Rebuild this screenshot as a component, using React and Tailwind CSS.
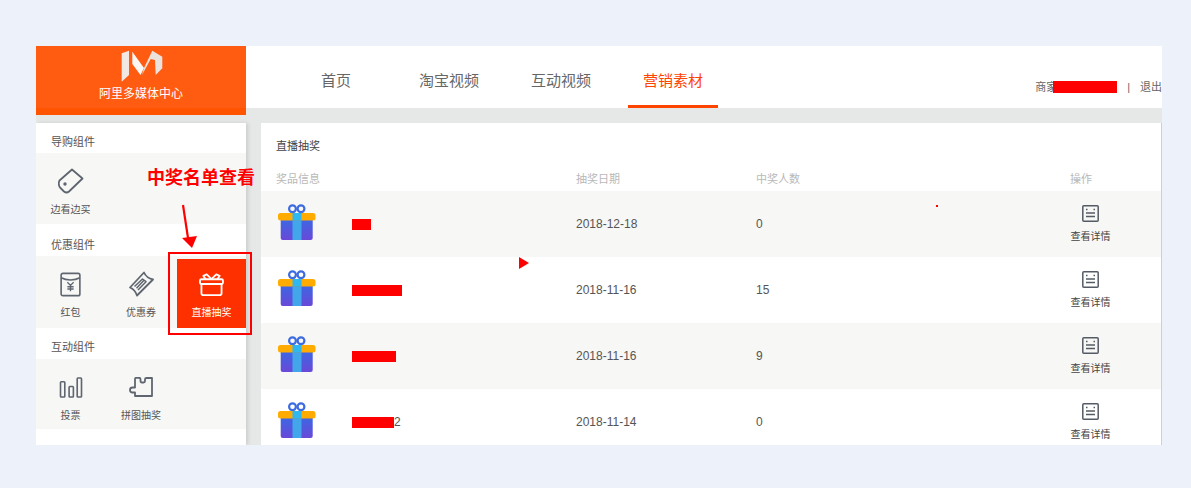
import React from "react";

const FONT = '"Liberation Sans", "Noto Sans CJK SC", sans-serif';

// 奖品图标
function GiftIcon({ id }) {
  return (
    <svg width="38" height="38" viewBox="0 0 38 38" className="mb-[2px] shrink-0">
      <defs>
        <linearGradient id={id} x1="0" y1="0" x2="0" y2="1">
          <stop offset="0" stopColor="#3a68e4" />
          <stop offset="1" stopColor="#6a48d8" />
        </linearGradient>
      </defs>
      <circle cx="14.5" cy="4.8" r="3.4" fill="none" stroke="#3d6be0" strokeWidth="2.2" />
      <circle cx="23" cy="4.8" r="3.4" fill="none" stroke="#3d6be0" strokeWidth="2.2" />
      <path d="M2.7 15h32v19a2 2 0 0 1-2 2H4.7a2 2 0 0 1-2-2z" fill={`url(#${id})`} />
      <rect x="0" y="9" width="37.5" height="7.5" rx="2.5" fill="#ffab00" />
      <rect x="14.5" y="9" width="9" height="7.5" fill="#2fb8ef" />
      <rect x="14.5" y="16.5" width="9" height="19.5" fill="#43a5ea" />
    </svg>
  );
}

function TagIcon() {
  return (
    <svg width="26" height="26" viewBox="0 0 26 26" fill="none" stroke="#5f6670" strokeWidth="1.8" strokeLinejoin="round">
      <path d="M14 1.5 24.5 10.5 11 23.5q-2.500 2-5 0L2.500 20Q.5 18 .8 14.500l.7-2z" />
      <circle cx="7" cy="16" r="1.7" fill="#5f6670" stroke="none" />
    </svg>
  );
}

function PacketIcon() {
  return (
    <svg width="23" height="25" viewBox="0 0 24 28" fill="none" stroke="#5f6670" strokeWidth="1.8">
      <rect x="1.5" y="1.5" width="21" height="25" rx="2" />
      <path d="M1.5 6.5c6 3.2 15 3.2 21 0" />
      <path d="M8.5 11.5 12 15l3.5-3.5M12 15v6.500M8.500 16.500h7M8.500 19h7" strokeWidth="1.5" />
    </svg>
  );
}

function CouponIcon() {
  return (
    <svg width="25" height="26" viewBox="0 0 25 26" fill="none" stroke="#5f6670" strokeWidth="1.8" strokeLinejoin="round">
      <path d="M15 1.500Q17.500 7 24 8.500L8 24.500Q6 18.500 1 16.500z" />
      <path d="M5.500 15.500 13.500 8l3.500 2.700L9 19M7.500 17.300 15 9.300" strokeWidth="1.500" />
    </svg>
  );
}

function BarsIcon() {
  return (
    <svg width="24" height="21" viewBox="0 0 24 22" fill="none" stroke="#5f6670" strokeWidth="1.7">
      <rect x="1" y="5" width="4.5" height="16" rx="0.8" />
      <rect x="10" y="10" width="4.5" height="11" rx="0.8" />
      <rect x="18.5" y="1" width="4.5" height="20" rx="0.8" />
    </svg>
  );
}

function PuzzleIcon() {
  return (
    <svg width="24" height="20" viewBox="0 0 24 20" fill="none" stroke="#5f6670" strokeWidth="1.8" strokeLinejoin="round">
      <path d="M6 5.500V2q0-1.200 1.200-1.200H10q1.500 0 1.500 1.500V4q0 1.500 1.500 1.500h1.500q1.500 0 1.500-1.500V2.300Q16 1 17.500 1H23v18H6v-3.500H3.500Q1 15.500 1 13t2.500-2.500H6z" />
    </svg>
  );
}

function PrizeBoxIcon() {
  return (
    <svg width="25" height="23" viewBox="0 0 26 24" fill="none" stroke="#fff" strokeWidth="1.9" strokeLinejoin="round">
      <rect x="1" y="6.5" width="24" height="5" rx="1.5" />
      <path d="M2.500 11.500V21a2 2 0 0 0 2 2h17a2 2 0 0 0 2-2v-9.500" />
      <path d="M13 6.500 8 1.500 4.500 3 7 6.500M13 6.500l5-5L21.500 3 19 6.500" />
    </svg>
  );
}

function DetailIcon() {
  return (
    <svg width="17" height="17" viewBox="0 0 17 17" fill="none" stroke="#555b64" strokeWidth="1.3">
      <rect x="0.8" y="0.8" width="15.4" height="15.4" rx="1" strokeWidth="1.5" />
      <path d="M4 4.500h1.500M11.500 4.500H13M4 8h9M4 11.500h9" />
    </svg>
  );
}

function SideCell({ icon, label, active, className }) {
  return (
    <div className={`flex flex-col items-center ${className} ${active ? "bg-[#ff3000] text-white" : "text-[#555]"}`}>
      {label && (
        <>
          <div className="mt-[10px] flex h-[30px] items-center justify-center">{icon}</div>
          <span className="mt-[7px] text-[10px] leading-[14px]">{label}</span>
        </>
      )}
    </div>
  );
}

function SideGroup({ title, children, titleClass }) {
  return (
    <div>
      <div className={`pl-[15px] text-[11px] leading-[14px] text-[#555] ${titleClass}`}>{title}</div>
      <div className="flex gap-[2px] bg-[#f7f7f5] pt-[3px]">{children}</div>
    </div>
  );
}

const rows = [
  { date: "2018-12-18", count: "0", bar: "w-[19px]", offset: "ml-[1px]", alt: true },
  { date: "2018-11-16", count: "15", bar: "w-[50px]", offset: "", alt: false },
  { date: "2018-11-16", count: "9", bar: "w-[44px]", offset: "ml-[2px]", alt: true },
  { date: "2018-11-14", count: "0", bar: "w-[42px]", offset: "-ml-[2px]", tail: "2", alt: false },
];

function NavItem({ label, active, className }) {
  return (
    <div
      className={`flex h-full w-[90px] items-center justify-center border-b-[3px] pt-[11px] text-[15px] ${active ? "border-[#ff4400] text-[#ff4400]" : "border-transparent text-[#666]"} ${className}`}
    >
      {label}
    </div>
  );
}

export default function App() {
  return (
    <div className="relative h-[488px] w-[1191px] overflow-hidden bg-[#edf1f9] pl-[36px] pt-[46px]" style={{ fontFamily: FONT }}>
      <div className="flex h-[399px] w-[1126px] overflow-hidden bg-[#e6e8e8]">
        {/* colonne gauche : logo + menu */}
        <div className="flex w-[210px] shrink-0 flex-col gap-[8px]">
          <div className="flex h-[69px] shrink-0 flex-col items-center border-b-[7px] border-[#ff5500] bg-[#ff5c12]">
            <svg width="44" height="34" viewBox="0 0 44 34" className="ml-[4px] mt-[4px]">
              <path d="M.7 3.300 8 .7V25l-7.300 6.700z" fill="#f1e8e4" />
              <path d="M11.300 1.700 23 18l-3.500 7-8.200-11z" fill="#fbf7f5" />
              <path d="M23 18 31.300.7l10 6V18.300L34.700 25 34 10l-4.300-1L21 25z" fill="#ece2dd" />
            </svg>
            <div className="mt-[2px] text-[12px] leading-[16px] text-white">阿里多媒体中心</div>
          </div>
          <div className="flex-1 bg-white pt-[12px] shadow-[2px_0_4px_rgba(0,0,0,0.12)]">
            <SideGroup title="导购组件" titleClass="pb-[4px]">
              <SideCell icon={<TagIcon />} label="边看边买" className="h-[68px] w-[69px]" />
              <div className="flex-1 bg-[#f7f7f5]" />
            </SideGroup>
            <div className="mt-[14px]">
              <SideGroup title="优惠组件" titleClass="pb-[4px]">
                <SideCell icon={<PacketIcon />} label="红包" className="h-[69px] w-[69px]" />
                <SideCell icon={<CouponIcon />} label="优惠券" className="h-[69px] w-[68px]" />
                <SideCell icon={<PrizeBoxIcon />} label="直播抽奖" active className="h-[69px] flex-1" />
              </SideGroup>
            </div>
            <div className="mt-[12px]">
              <SideGroup title="互动组件" titleClass="pb-[5px]">
                <SideCell icon={<BarsIcon />} label="投票" className="h-[67px] w-[69px]" />
                <SideCell icon={<PuzzleIcon />} label="拼图抽奖" className="h-[67px] w-[68px]" />
                <SideCell className="h-[67px] flex-1" />
              </SideGroup>
            </div>
          </div>
        </div>

        {/* colonne droite : navigation + liste */}
        <div className="flex min-w-0 flex-1 flex-col">
          <div className="flex h-[62px] shrink-0 items-center bg-white">
            <div className="ml-[45px] flex h-full items-stretch">
              <NavItem label="首页" />
              <NavItem label="淘宝视频" className="ml-[23px]" />
              <NavItem label="互动视频" className="ml-[22px]" />
              <NavItem label="营销素材" active className="ml-[22px]" />
            </div>
            <div className="ml-auto flex items-center pt-[20px] text-[11px] text-[#666]">
              <span>商家</span>
              <span className="-ml-[4px] inline-block h-[12px] w-[64px] bg-[#ff0000]" />
              <span className="ml-[10px] text-[#666]">|</span>
              <span className="ml-[10px]">退出</span>
            </div>
          </div>
          <div className="ml-[15px] mt-[15px] min-h-0 flex-1 overflow-hidden border-r border-[#cfcfcf] bg-white">
            <div className="pl-[15px] pt-[15px] text-[11px] leading-[16px] text-[#444]">直播抽奖</div>
            <div className="mt-[17px] flex h-[16px] items-center text-[11px] text-[#b8b8b8]">
              <div className="w-[315px] pl-[15px]">奖品信息</div>
              <div className="w-[180px]">抽奖日期</div>
              <div className="w-[314px]">中奖人数</div>
              <div>操作</div>
            </div>
            <div className="mt-[4px]">
              {rows.map((row, i) => (
                <div key={i} className={`flex h-[66px] items-center text-[12px] text-[#555] ${row.alt ? "bg-[#f7f7f5]" : "bg-white"}`}>
                  <div className="flex w-[315px] items-center pl-[17px]">
                    <GiftIcon id={`gift-${i}`} />
                    <div className={`ml-[36px] flex items-center ${row.offset}`}>
                      <span className={`inline-block h-[11px] bg-[#ff0000] ${row.bar}`} />
                      {row.tail && <span>{row.tail}</span>}
                    </div>
                  </div>
                  <div className="w-[180px]">{row.date}</div>
                  <div className="w-[295px]">{row.count}</div>
                  <div className="flex w-[79px] flex-col items-center">
                    <DetailIcon />
                    <span className="mt-[8px] text-[10px] leading-[14px] text-[#444]">查看详情</span>
                  </div>
                </div>
              ))}
            </div>
          </div>
        </div>
      </div>

      {/* annotations par-dessus la capture */}
      <div className="absolute left-[147px] top-[166px] text-[18px] font-bold leading-[24px] text-[#ff0000]">中奖名单查看</div>
      <svg className="absolute left-[175px] top-[200px]" width="30" height="52" viewBox="0 0 30 52">
        <path d="M8 5 13 38" stroke="#ff0000" strokeWidth="2.2" fill="none" />
        <path d="M7 38 22 36 17 48z" fill="#ff0000" />
      </svg>
      <div className="absolute left-[168px] top-[252px] h-[83px] w-[84px] border-2 border-[#ff0000]" />
      <div className="absolute left-[519px] top-[257px] h-0 w-0 border-y-[6px] border-l-[10px] border-y-transparent border-l-[#ff0000]" />
      <div className="absolute left-[936px] top-[205px] h-[2px] w-[2px] bg-[#ff0000]" />
    </div>
  );
}
